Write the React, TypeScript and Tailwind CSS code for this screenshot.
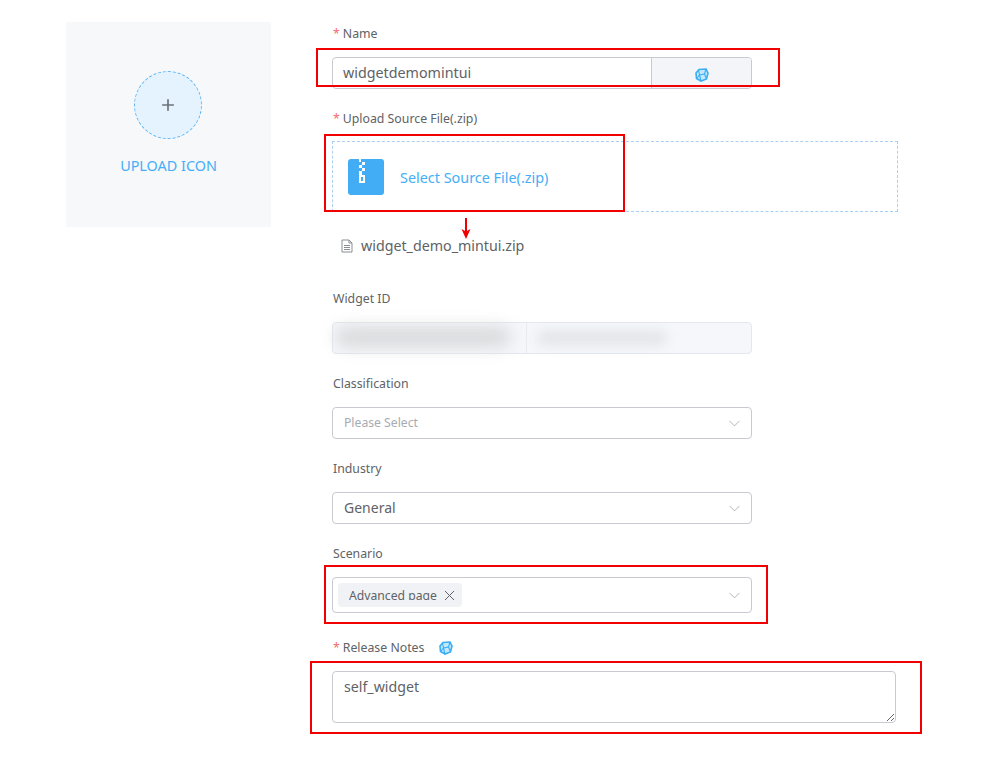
import React from "react";
import { ChevronDown, X, Plus } from "lucide-react";

const Label = ({ text, required }: { text: string; required?: boolean }) => (
  <div className="flex h-[22px] items-center pl-px text-[12.3px] text-[#606266]">
    {required && <span className="mr-[3px] text-[#f56c6c]">*</span>}
    {text}
  </div>
);

const TranslateIcon = () => (
  <svg width="14" height="14" viewBox="0 0 14 14" fill="#c5e8fc" stroke="#38aef5" strokeWidth="1.6">
    <path d="M4 1.5 L11 1 L13 5 L11.5 11 L6 13 L1.5 10.5 L1 5 Z" />
    <path d="M3.5 2 L4.5 7 L1.5 10.5 M4.5 7 L9.5 6 L11.5 11 M9.5 6 L11 1 M4.5 7 L6 13" strokeWidth="1.1" fill="none" />
  </svg>
);

const SelectBox = ({ children, h = "h-8" }: { children: React.ReactNode; h?: string }) => (
  <div className={`flex w-[420px] items-center justify-between rounded border border-[#c8cacf] bg-white pr-[7px] ${h}`}>
    {children}
    <ChevronDown size={19} strokeWidth={1.1} className="text-[#a8abb2]" />
  </div>
);

const RedBox = ({ className }: { className: string }) => (
  <div className={`pointer-events-none absolute border-2 border-[#f00000] ${className}`} />
);

const App = () => {
  return (
    <div className="relative flex h-[757px] w-[994px] overflow-hidden bg-white pl-[66px] pt-[22px] font-['Noto_Sans','Liberation_Sans',sans-serif]">
      <div className="flex h-[205px] w-[205px] shrink-0 flex-col items-center bg-[#f6f8fa] pr-[2px] pt-[49px]">
        <div className="flex h-[68px] w-[68px] items-center justify-center rounded-full border border-dashed border-[#5ab4f5] bg-[#e5f3fe]">
          <Plus size={18} strokeWidth={2.2} className="text-[#6b7178]" />
        </div>
        <div className="mt-[17px] pl-[2px] text-[14.4px] leading-5 text-[#46aef7]">UPLOAD ICON</div>
      </div>

      <div className="ml-[61px] flex flex-col pt-px">
        <Label text="Name" required />
        <div className="mt-[12px] flex h-8 w-[420px] overflow-hidden rounded border border-[#c8cacf]">
          <div className="flex flex-1 items-center pl-[10px] text-[14.3px] text-[#606266]">widgetdemomintui</div>
          <div className="flex w-[100px] items-center justify-center border-l border-[#c8cacf] bg-[#f4f5f9] pt-[3px]">
            <TranslateIcon />
          </div>
        </div>

        <div className="mt-[19px]">
          <Label text="Upload Source File(.zip)" required />
        </div>
        <div className="mt-[11px] flex h-[71px] w-[566px] items-center border border-dashed border-[#a9cff5] pl-[15px]">
          <div className="relative h-9 w-9 rounded-[3px] bg-[#42adf4]">
            <div className="absolute left-[10px] top-0 flex w-[7px] flex-col">
              <div className="ml-[1px] h-[3px] w-[2px] bg-white" />
              <div className="ml-[4px] h-[3px] w-[3px] bg-white" />
              <div className="ml-[1px] h-[3px] w-[3px] bg-white" />
              <div className="ml-[4px] h-[3px] w-[3px] bg-white" />
              <div className="ml-[1px] h-[4px] w-[3px] bg-white" />
              <div className="ml-[1px] h-[8px] w-[6px] border-2 border-white" />
            </div>
          </div>
          <span className="ml-[16px] pt-[2px] text-[14.4px] text-[#46aef7]">Select Source File(.zip)</span>
        </div>

        <div className="mt-[22px] flex h-6 items-center pl-[9px] text-[14.25px] text-[#606266]">
          <svg width="12" height="14" viewBox="0 0 12 14" fill="none" stroke="#8a8d93" strokeWidth="1">
            <path d="M1 1 H8 L11 4 V13 H1 Z M8 1 V4 H11 M3 6.5 H9 M3 8.5 H9 M3 10.5 H9" />
          </svg>
          <span className="ml-[8px]">widget_demo_mintui.zip</span>
        </div>

        <div className="mt-[30px]">
          <Label text="Widget ID" />
        </div>
        <div className="relative mt-[12px] flex h-8 w-[420px] rounded border border-[#e4e7ed] bg-[#f5f7fa]">
          <div className="w-[194px] border-r border-[#e9ebf0]" />
          <div className="absolute left-[2px] top-[4px] h-[20px] w-[176px] rounded-full bg-[#d8dadc] blur-[8px]" />
          <div className="absolute left-[204px] top-[8px] h-[14px] w-[130px] rounded-full bg-[#e2e4e7] blur-[6px]" />
        </div>

        <div className="mt-[19px]">
          <Label text="Classification" />
        </div>
        <div className="mt-[12px]">
          <SelectBox>
            <span className="pl-[11px] pt-px text-[12.2px] text-[#a8abb2]">Please Select</span>
          </SelectBox>
        </div>

        <div className="mt-[19px]">
          <Label text="Industry" />
        </div>
        <div className="mt-[12px]">
          <SelectBox>
            <span className="pl-[11px] text-sm text-[#606266]">General</span>
          </SelectBox>
        </div>

        <div className="mt-[19px]">
          <Label text="Scenario" />
        </div>
        <div className="mt-[12px]">
          <SelectBox h="h-9">
            <div className="ml-[5px] flex h-6 items-center rounded bg-[#f0f2f5] pl-[11px] pr-[4px] text-[12.2px] text-[#606266]">
              <span className="mt-[4px] h-[13px] self-start overflow-hidden leading-[17px]">Advanced page</span>
              <X size={17} strokeWidth={1.4} className="ml-[4px]" />
            </div>
          </SelectBox>
        </div>

        <div className="mt-[24px] flex items-center">
          <Label text="Release Notes" required />
          <span className="ml-[15px]">
            <TranslateIcon />
          </span>
        </div>
        <textarea
          readOnly
          defaultValue="self_widget"
          className="mt-[12px] h-[52px] w-[564px] resize-y rounded border border-[#c8cacf] px-[11px] py-[5px] text-[14.2px] leading-5 text-[#606266] outline-none"
        />
      </div>

      <RedBox className="left-[316px] top-[48px] h-[39px] w-[464px]" />
      <RedBox className="left-[324px] top-[134px] h-[78px] w-[301px]" />
      <RedBox className="left-[324px] top-[565px] h-[59px] w-[444px]" />
      <RedBox className="left-[310px] top-[661px] h-[73px] w-[612px]" />

      <svg className="absolute left-[460px] top-[218px]" width="12" height="22" viewBox="0 0 12 22" fill="#f00000">
        <rect x="5" y="0" width="2" height="14" />
        <path d="M1.5 11 L6 21 L10.5 11 L6 13.5 Z" />
      </svg>
    </div>
  );
};

export default App;
